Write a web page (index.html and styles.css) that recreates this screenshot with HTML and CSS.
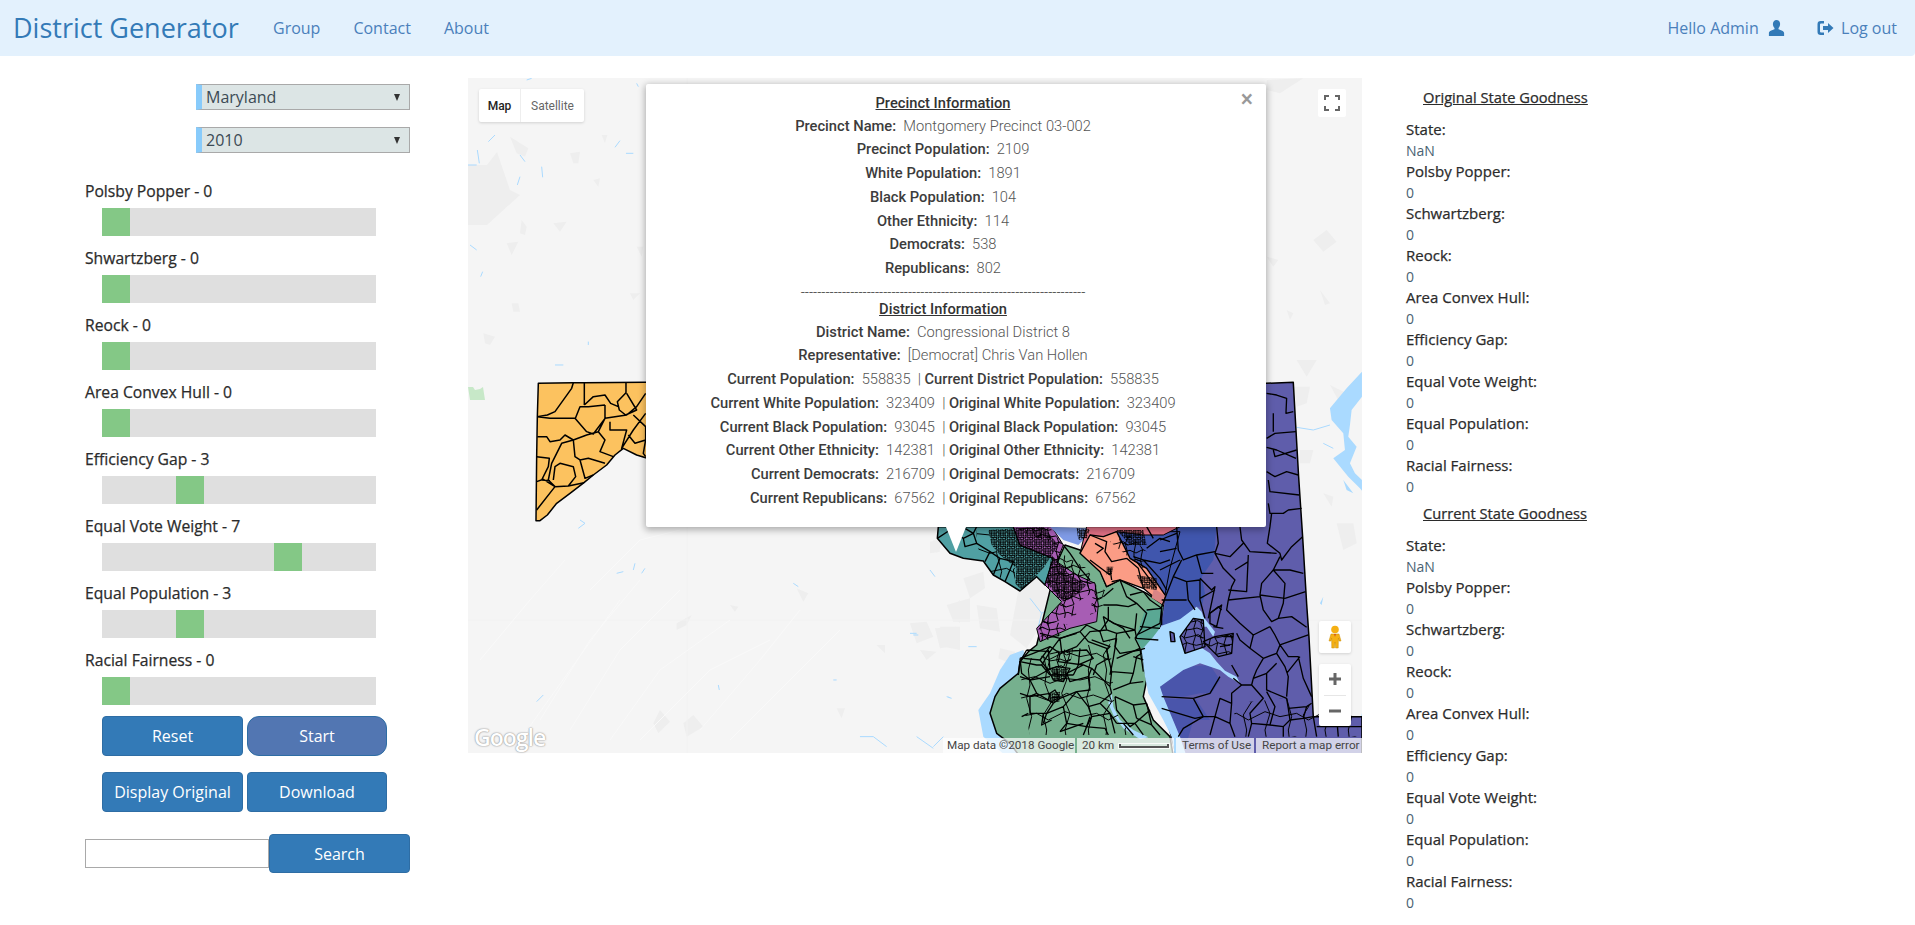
FILE: index.html
```html
<!DOCTYPE html>
<html lang="en">
<head>
    <meta charset="UTF-8">
    <meta name="viewport" content="width=device-width, initial-scale=1.0">
    <title>District Generator</title>
    <link rel="stylesheet" href="styles.css">
</head>
<body>

<!-- Navigation Bar -->
<nav class="navbar">
    <a class="brand" href="#">District Generator</a>
    <ul class="nav-links">
        <li><a href="#">Group</a></li>
        <li><a href="#">Contact</a></li>
        <li><a href="#">About</a></li>
    </ul>
    <ul class="nav-links nav-right">
        <li>
            <a href="#">Hello Admin
                <svg class="nav-icon" viewBox="0 0 16 16"><path d="M8 0C5.8 0 4.4 1.7 4.4 4.1 4.4 5.7 5.1 7.2 6 8V9.3C4 10.1.4 11 .4 13V16H15.6V13C15.6 11 12 10.1 10 9.3V8C10.9 7.2 11.6 5.7 11.6 4.1 11.6 1.7 10.2 0 8 0Z"/></svg>
            </a>
        </li>
        <li>
            <a href="#">
                <svg class="nav-icon icon-logout" viewBox="0 0 16 16"><path d="M6.5 1H3.2Q0 1 0 4.2V11.8Q0 15 3.2 15H6.5V12.6H3.6Q2.5 12.6 2.5 11.5V4.5Q2.5 3.4 3.6 3.4H6.5ZM5.5 6H10.5V3L16 8 10.5 13V10H5.5Z"/></svg>
                Log out
            </a>
        </li>
    </ul>
</nav>

<main class="page">

    <!-- Left controls -->
    <section class="controls">
        <div class="select-wrap">
            <select><option>Maryland</option></select>
        </div>
        <div class="select-wrap">
            <select><option>2010</option></select>
        </div>

        <div class="sliders">
            <div class="slider">
                <label>Polsby Popper - 0</label>
                <div class="track"><div class="thumb" style="margin-left: 0%"></div></div>
            </div>
            <div class="slider">
                <label>Shwartzberg - 0</label>
                <div class="track"><div class="thumb" style="margin-left: 0%"></div></div>
            </div>
            <div class="slider">
                <label>Reock - 0</label>
                <div class="track"><div class="thumb" style="margin-left: 0%"></div></div>
            </div>
            <div class="slider">
                <label>Area Convex Hull - 0</label>
                <div class="track"><div class="thumb" style="margin-left: 0%"></div></div>
            </div>
            <div class="slider">
                <label>Efficiency Gap - 3</label>
                <div class="track"><div class="thumb" style="margin-left: 27%"></div></div>
            </div>
            <div class="slider">
                <label>Equal Vote Weight - 7</label>
                <div class="track"><div class="thumb" style="margin-left: 62.8%"></div></div>
            </div>
            <div class="slider">
                <label>Equal Population - 3</label>
                <div class="track"><div class="thumb" style="margin-left: 27%"></div></div>
            </div>
            <div class="slider">
                <label>Racial Fairness - 0</label>
                <div class="track"><div class="thumb" style="margin-left: 0%"></div></div>
            </div>
        </div>

        <div class="button-grid">
            <button class="btn">Reset</button>
            <button class="btn btn-start">Start</button>
            <button class="btn">Display Original</button>
            <button class="btn">Download</button>
        </div>

        <div class="search-row">
            <input type="text" class="search-input">
            <button class="btn btn-search">Search</button>
        </div>
    </section>

    <!-- Map -->
    <section class="map">
        <svg class="map-canvas" viewBox="468 78 894 675">
            <defs>
                <pattern id="mesh-fine" width="27" height="27" patternUnits="userSpaceOnUse">
                    <path d="M0 4L7 3 14 6 20 3 27 4M0 11L6 10 13 12 20 9 27 11M0 18L7 16 13 19 21 17 27 18M0 24L6 25 14 23 21 25 27 24M3 0L4 7 2 14 4 20 3 27M10 0L9 6 11 12 9 19 10 27M17 0L18 6 16 13 18 20 17 27M23 0L23 5 24 13 23 19 23 27" fill="none" stroke="#000" stroke-width="2.6"/>
                </pattern>
                <pattern id="mesh-mid" width="93" height="93" patternUnits="userSpaceOnUse">
                    <path d="M0 12L20 8 38 18 60 10 76 16 93 12M0 34L18 30 40 38 58 28 78 36 93 34M0 56L22 50 36 60 62 52 74 60 93 56M0 78L16 82 42 76 60 84 80 74 93 78M10 0L14 12 8 32 14 52 6 78 10 93M32 0L30 18 36 36 28 56 34 80 32 93M54 0L58 10 52 30 60 52 54 82 54 93M76 0L74 16 80 36 72 60 80 74 76 93M14 52L36 60M58 10L76 16M36 36L58 28" fill="none" stroke="#000" stroke-width="3"/>
                </pattern>
                <pattern id="mesh-coarse" width="180" height="180" patternUnits="userSpaceOnUse">
                    <path d="M0 30L45 20 90 40 130 25 180 30M0 85L40 75 95 95 140 70 180 85M0 140L50 130 85 150 135 125 180 140M25 0L30 45 20 85 35 140 25 180M80 0L75 40 95 95 70 135 80 180M135 0L140 30 125 70 150 130 135 180" fill="none" stroke="#000" stroke-width="3"/>
                </pattern>
            </defs>

            <!-- base map -->
            <rect x="468" y="78" width="894" height="675" fill="#f5f5f5"/>
            <g fill="#eeeeee">
                <path d="M468 165H487L497 152 510 190 520 195 487 225 468 225Z"/>
                <g transform="translate(460 70) scale(.3333)">
                    <path d="M150 200L205 235 195 260 170 250ZM330 250L360 245 355 280 340 280ZM425 195L442 195 435 220ZM400 330L420 325 415 350ZM280 460L320 455 300 485ZM185 450L200 470 195 495 180 490ZM140 520L175 515 155 555ZM530 530L550 530 545 560ZM510 670L540 670 520 690ZM155 700L175 700 180 725 160 725ZM70 790L105 800 90 825 75 820Z"/>
                </g>
                <g transform="translate(460 360) scale(.3333)">
                    <path d="M600 1050L630 1085 595 1120 580 1090ZM700 1065L730 1100 680 1130 670 1090ZM1130 1045L1155 1045 1145 1075ZM1350 790L1400 785 1420 830 1370 850ZM1440 800L1500 800 1500 870 1450 860ZM1380 870L1430 875 1400 900ZM1250 855L1275 855 1275 880ZM1010 685L1045 700 1030 725ZM810 735L835 740 825 755ZM650 790L695 765 680 795 650 810ZM1470 750L1500 720 1500 790ZM1420 540L1450 550 1430 580Z"/>
                </g>
                <g transform="translate(860 70) scale(.3333)">
                    <path d="M1220 30L1330 25 1260 70 1220 60ZM1360 510L1400 480 1430 515 1390 545ZM1220 560L1255 570 1240 590ZM1380 660L1410 700 1395 705ZM1280 720L1300 730 1290 750Z"/>
                </g>
                <g transform="translate(1150 360) scale(.3333)">
                    <path d="M430 80L480 80 470 130 440 140ZM560 490L610 490 620 550 580 570ZM450 270L490 270 480 310 450 310ZM520 400L550 410 545 440ZM440 0L500 0 470 50ZM540 75L590 100 570 130Z"/>
                </g>
                <g transform="translate(930 525) scale(.3333)">
                    <path d="M0 50L25 45 30 80 0 85ZM100 160L160 140 165 190 120 220ZM50 240L120 220 120 290 70 290ZM15 310L80 305 90 360 30 370ZM140 240L200 250 210 320 150 310ZM210 370L255 380 250 420 205 400ZM270 170L330 155 395 230 320 320 290 370 240 330Z"/>
                </g>
            </g>
            <path d="M468 620H1362M687 78V753" stroke="#f2f2f2" fill="none"/>
            <g fill="none" stroke="#f9f9f9" stroke-width="1">
                <path d="M540 720L590 640 640 580M570 730L620 650 680 590M610 740L660 670 730 620M480 660L530 600 565 560M700 730L760 660 800 610M640 740L710 670 770 640M520 740L570 670 620 600M590 590L640 540 680 530M730 740L790 680 840 630"/>
            </g>
            <path d="M468 387H473L475 390 480 389 483 387 485 400H470Z" fill="#c7e8c8"/>

            <!-- base map water -->
            <g fill="#aadaff">
                <g transform="translate(460 70) scale(.3333)" fill="none" stroke="#aadaff" stroke-width="3">
                    <path d="M24 285H50M105 195L85 215M52 240L58 280M180 255L195 275M180 320L172 345M465 232L480 212M498 250H520M245 290L248 322M200 30L215 25M530 40L535 50M30 525L50 540M68 605L62 620M385 815V825M285 885H310"/>
                </g>
                <g transform="translate(900 480) scale(.3333)">
                    <path transform="translate(780 -330)" d="M606 5L560 55 510 115 515 150 550 190 555 240 520 265 565 320 600 355 606 362V330L585 310 570 280 590 230 565 200 570 165 575 120 606 80Z"/>
                    <path d="M370 510L330 525 300 570 270 640 235 690 250 770 320 830H430L450 730Z"/>
                    <path d="M1380 720L1386 700V730ZM1260 370L1270 350 1265 375ZM1330 0L1360 40 1340 30Z"/>
                </g>
                <g transform="translate(900 480) scale(.3333)" fill="none" stroke="#aadaff" stroke-width="3">
                    <path d="M1190 -158L1240 -150 1290 -165M1270 -110L1300 -95M390 355L425 400 415 440M425 400L465 375M30 460H50M130 770L100 800M140 650L155 655M205 500H230M90 270L105 290"/>
                </g>
                <g transform="translate(460 360) scale(.3333)" fill="none" stroke="#aadaff" stroke-width="3">
                    <path d="M360 480L375 490 355 505M470 640L490 635M525 610L520 630M555 625L545 640M230 1025L250 1005M1360 825H1375M1000 670L1015 680M775 975L778 990M1120 960H1130M1465 1010L1470 1015M1200 1130L1240 1130 1280 1160M1370 1130L1420 1165"/>
                </g>
            </g>

            <!-- districts -->
            <g transform="translate(460 360) scale(.3333)" stroke="#000" stroke-width="4.5" stroke-linejoin="round">
                <path fill="#fcc25f" d="M235 70L340 68 372 68 557 67 600 67V300L557 293 530 285 490 265 465 285 440 315 400 345 372 368 330 400 290 430 262 465 240 482 228 482 230 290 232 170Z"/>
                <path fill="none" d="M232 170L262 165 285 155 335 85 340 68M373 68V135M498 68V98L472 125 478 150 497 165 530 150 500 100M373 135L400 110 435 105 452 130 475 140M435 135L385 140 360 140 345 178M232 170L270 175 345 175 380 215 400 222 435 175V135M435 175L500 165 530 140 557 100M435 175L415 215 435 240 420 275 460 290M415 215L380 225 340 240 305 250 275 310 265 360 285 380 325 378 347 350 340 320 300 310 285 320 280 360M232 230L260 230 270 245 300 240 315 225 340 240M340 240L345 290 360 300 385 295 435 310M360 300L375 355 400 345M230 290L268 295 265 320 245 360 270 362M230 365L250 358 285 380 230 450M325 378L372 368M450 185V210H500L485 265 520 210 557 160M520 165L557 200V240L525 250 505 225M557 240L550 280 557 290"/>
            </g>

            <g transform="translate(900 480) scale(.3333)" stroke-linejoin="round">
                <!-- east side, then its bluer western part -->
                <path fill="#5f5dab" stroke="#000" stroke-width="4.5" d="M1000 -290H1098L1180 -293 1188 -150 1196 -10 1208 170 1220 370 1227 470 1240 710H1386V830H830L770 600 780 380 740 141Z"/>
                <path fill="#4056ad" d="M750 120H950L945 200 940 240 905 290 915 340 905 380 885 380 850 415 785 437 800 340 740 290 700 250 690 225 740 180Z"/>
                <path fill="#4a55ab" d="M780 620L850 560 930 555 960 600 935 640 900 640 850 650 780 650ZM790 655L840 770 860 790 880 720 930 720 890 660Z"/>

                <!-- green district -->
                <path fill="#76b08e" stroke="#000" stroke-width="4.5" d="M385 515L360 545 355 580 300 625 285 650 270 700 290 760 330 790 360 830H820L810 770 760 720 730 650 740 600 725 510 770 510 780 440 790 375 740 340 660 300 620 320 600 270 540 210 495 195 470 250 410 495Z"/>
                <path fill="#5aa894" d="M710 465L735 390 790 380 780 440 770 510 725 505 710 480Z"/>
                <path fill="#aadaff" d="M635 640L640 680 660 720 700 750 745 772 720 778 670 745 640 705 625 670Z"/>

                <!-- water over the bay -->
                <path fill="#aadaff" d="M905 395L890 380 870 395 840 418 785 437 760 470 725 510 735 590 745 640 790 720 815 770 825 830H860L840 770 790 650 780 620 850 570 900 550 960 570 985 590 1020 610 1010 590 975 572 950 545 930 520 900 500 880 480 900 440 920 440 940 470 945 455 925 430 910 410Z"/>

                <!-- islands -->
                <g transform="translate(780 -330)">
                    <path fill="#5f5dab" stroke="#000" stroke-width="4" d="M60 800L100 745 130 750 135 830 75 850ZM130 815L165 800 220 790 215 850 175 860ZM150 730L185 705 170 770 150 760ZM30 785L42 790 45 815 33 815Z"/>
                    <path fill="url(#mesh-mid)" d="M60 800L100 745 130 750 135 830 75 850ZM130 815L165 800 220 790 215 850 175 860Z"/>
                </g>

                <!-- middle of the state, coordinates taken from the close crop -->
                <g transform="translate(90 135)">
                    <path fill="#50a0a3" stroke="#000" stroke-width="4.5" d="M25 5L22 40 60 85 100 100 160 108 190 150 225 170 270 198 320 155 345 180 370 100 270 60 250 5Z"/>
                    <path fill="#a75db4" stroke="#000" stroke-width="3" d="M250 5H365L400 60 380 110 440 150 495 175 505 240 500 290 420 310 330 350 320 310 395 230 345 180 370 100 270 60Z"/>
                    <path fill="#7f9be6" d="M360 5L475 10 470 35 445 60 400 45Z"/>
                    <path fill="#4056ad" stroke="#000" stroke-width="3" d="M560 20L750 20 720 130 705 210 650 130 600 100 580 60Z"/>
                    <path fill="#df6f84" stroke="#000" stroke-width="3" d="M470 5H750L700 30 640 30 560 20 490 50 510 75 450 85Z"/>
                    <path fill="#fb9c85" stroke="#000" stroke-width="4" d="M450 85L480 30 520 35 560 20 580 60 600 100 650 130 705 210 700 240 640 190 570 165 530 185 510 140Z"/>
                    <path fill="#da8585" d="M672 190L705 212 700 240 665 218Z"/>

                    <g fill="none" stroke="#000" stroke-width="4">
                        <path d="M400 60L420 85 450 130 480 165M480 105L500 120 540 150M545 170L570 165 590 215 620 235M520 215L550 190M520 240H560L595 245 620 235 650 265 635 310 615 340M600 210L640 200 660 225 695 250M650 255L695 250 690 295M620 330L690 295M535 245V285L580 310 600 340M535 285L510 320 520 350 560 340M510 320L470 300 450 320 475 350 530 370 535 400 500 420M450 320L390 340 360 380 290 375M360 380L335 420 360 450M390 340L395 380 470 375 490 400 445 420 430 450M615 340L630 370 640 440M560 340L550 400 540 450M290 375L270 410 320 420 335 420M270 410L265 450M450 370L445 420M500 420L490 450M560 400L630 370M360 450H430"/>
                        <path d="M480 30L530 50 525 80 545 110 590 100M540 130L545 165M590 100L625 130 640 190M620 110L680 190M495 55L520 70 500 85"/>
                        <path d="M22 40L60 15M60 15L100 40 130 25 140 55 180 80 165 110M100 40L105 65 140 55M180 80L210 100 190 150M210 100L250 110 225 170M130 25L140 5M105 10L130 25"/>
                        <path d="M650 70L690 40 720 50M640 105L690 115 720 105M610 95L640 105 690 160 710 195M670 40L650 5"/>
                    </g>

                    <!-- dense precincts -->
                    <path fill="url(#mesh-coarse)" d="M140 15L175 15 185 60 210 90 255 130 255 175 190 150 160 108 140 60Z"/>
                    <path fill="url(#mesh-fine)" d="M175 15L340 5 385 60 340 130 320 150 275 195 255 175 260 130 210 90 185 60Z"/>
                    <path fill="url(#mesh-mid)" d="M250 8L360 8 400 60 380 110 420 140 480 165 490 200 430 240 440 270 400 280 340 310 320 335 330 300 395 230 345 180 360 130 380 60Z"/>
                    <path fill="url(#mesh-fine)" d="M365 90L420 150 470 180 440 210 400 230 350 175Z"/>
                    <path fill="url(#mesh-fine)" d="M560 15L640 15 650 60 600 60ZM620 150L680 160 680 195 640 190ZM440 10L480 12 470 40 445 45ZM530 125L550 125 545 150 530 150Z"/>
                    <path fill="url(#mesh-mid)" d="M385 80L470 130 510 200 520 250 480 270 490 200 420 150 380 110ZM495 185L525 195 515 225 495 215ZM540 50L600 30 650 80 640 130 600 100Z"/>
                    <path fill="url(#mesh-mid)" d="M360 380L430 370 420 420 350 440ZM340 285L420 300 380 340 330 350Z"/>
                </g>

                <!-- southern green precincts -->
                <g transform="translate(360 390)" fill="none" stroke="#000" stroke-width="4">
                    <path fill="url(#mesh-coarse)" stroke="none" d="M10 150L270 90 280 240 285 300 330 375H30L0 250Z"/>
                    <path d="M0 145L40 130 90 110 120 130 170 110 210 65 260 60 250 20M120 130L115 155 190 165 215 175 270 230 275 250M260 60L290 70 285 110 300 130 360 120 375 115M215 90L270 110 260 120 275 185 270 230M275 185L340 190 350 140 365 130M340 190L330 220 370 215M280 240L330 220M285 260L290 300 330 350 345 340 390 300M285 260L340 285 380 280M190 165L140 190 150 215 205 200 210 240 170 245 130 290 80 310H30V260L50 250 30 210 0 200M170 245L205 290 215 320 270 310 290 340M130 290L140 340 120 365M205 290L240 280 275 250M270 310L285 370M200 350L210 320M195 350L255 355 265 375M70 310L65 345 95 330M5 320L25 310"/>
                    <path d="M85 180L110 170 150 175 130 215 100 210ZM100 190L125 195M110 175L115 210M90 250L105 240 120 265 100 280 85 270ZM95 262H115M60 70L120 85 170 70M0 145L5 190 30 210 90 200M85 120L90 180M250 20L280 40 345 60M290 70L345 60M345 60L350 10M345 60L350 85 415 90M360 50L420 55M340 140L370 150M310 340L340 375M350 325L395 345M140 340L200 350"/>
                    <path d="M10 145L60 150 90 110M30 210L85 180M60 150L85 180M205 200L215 175M30 260L90 250M50 250L85 270M0 250L30 260M100 280L80 310M120 265L170 245M80 310L70 340M215 320L200 350M240 280L270 310M290 340H345M340 285L350 325M380 280L395 345M345 340L370 375M395 345L420 375M200 350L190 375M120 365L190 340"/>
                    <path fill="url(#mesh-fine)" stroke="none" d="M90 175L145 175 130 215 100 210ZM85 250L120 245 118 275 90 280Z"/>
                </g>

                <!-- eastern precincts -->
                <g transform="translate(780 -330)" fill="none" stroke="#000" stroke-width="4">
                    <path fill="url(#mesh-coarse)" stroke="none" d="M220 1000L380 985 460 1010 606 1045V1100H230Z"/>
                    <path d="M320 70L350 75 380 85 378 130 400 125M340 130V185M320 205L345 190 408 185M320 232L350 240 408 265M340 240L345 260 410 240M320 305L345 320 380 305 415 315M325 330L330 365 418 375M325 400L330 430H370L385 420 425 415M335 430L330 470 322 520 360 550 365 570 395 530 428 500"/>
                    <path d="M240 470L245 510 270 545 350 550M170 470L175 520 165 550 190 595 225 630 215 650 205 690M165 550L210 560 250 520M265 555L260 665 205 660M225 600L265 575M360 560L340 600H390L430 610M340 600L305 640 300 675 310 720 335 755 355 745 370 700 375 640 340 600M375 685L437 665M355 745L395 740 440 772M300 675L375 685M205 690L300 680M205 690L200 720 240 760 280 795 330 770M330 770L345 795 360 825 445 795"/>
                    <path d="M280 795L270 835 310 865 350 850 360 825 385 860H415L430 925 455 980M270 835L240 810 230 790M310 865L290 900 280 925 320 910 350 880M350 850L375 890 385 920 380 980M420 860L380 910M280 925L275 945H245L215 970V1000M320 910V960L380 985 385 1015 440 1010 455 1000M275 945L310 985 270 1030 275 1060 330 1065 345 1010 320 965M215 1000L210 1060 225 1100M5 980L100 985 150 970 180 920M100 985L130 1040H165L180 985 215 1000M165 1040L150 1095M130 1040L70 1075 55 1100M210 1060L165 1040M275 1060L265 1100M330 1065L370 1070V1100M385 1015L390 1050 370 1070M440 1010L430 1045 390 1050M430 1045L460 1040 470 1100M470 1070H606M530 1040L535 1100"/>
                    <path d="M50 470L55 540 70 570 110 555 125 610H160M110 555L165 545M0 545L50 535M0 600L60 570M0 510L50 490M65 570L40 620 5 710V765M40 620L80 635 85 690 105 720M80 635L120 630V690L135 745M120 625L155 660 165 650 145 745M5 690H80M120 685L165 660"/>
                    <path d="M5 1015L105 1045 130 1040M150 730L175 710 185 720M160 770L190 775M190 800H220M180 830L210 825M235 920L215 885M245 945L220 925"/>
                </g>
            </g>
        </svg>

        <!-- Map controls -->
        <div class="map-type">
            <button class="map-type-btn map-type-active">Map</button>
            <button class="map-type-btn">Satellite</button>
        </div>
        <button class="map-square map-fullscreen">
            <svg viewBox="0 0 18 18" width="18" height="18"><path d="M1 1H6V3H3V6H1ZM12 1H17V6H15V3H12ZM1 12H3V15H6V17H1ZM15 12H17V17H12V15H15Z" fill="#666"/></svg>
        </button>
        <button class="map-square map-pegman">
            <svg viewBox="0 0 14 24" width="14" height="24"><circle cx="7" cy="4.5" r="3.8" fill="#f5b014"/><path d="M3 9H11L13 16H11L10.4 13 10.2 23H7.6L7 17 6.4 23H3.8L3.6 13 3 16H1Z" fill="#f5b014" stroke="#c98d08" stroke-width=".5"/><path d="M6 9H8L7 12Z" fill="#d2521e"/></svg>
        </button>
        <div class="map-zoom">
            <button class="map-zoom-btn">
                <svg viewBox="0 0 12 12" width="12" height="12"><path d="M4.5 0H7.5V4.5H12V7.5H7.5V12H4.5V7.5H0V4.5H4.5Z" fill="#666"/></svg>
            </button>
            <span class="map-zoom-line"></span>
            <button class="map-zoom-btn">
                <svg viewBox="0 0 12 12" width="12" height="12"><path d="M0 4.5H12V7.5H0Z" fill="#666"/></svg>
            </button>
        </div>
        <div class="google-logo">Google</div>
        <div class="attribution">
            <span class="attr-cell attr-data">Map data ©2018 Google</span>
            <span class="attr-cell attr-scale">20 km <i class="scale-bar"></i></span>
            <span class="attr-cell attr-terms">Terms of Use</span>
            <span class="attr-cell attr-report">Report a map error</span>
        </div>

        <!-- Info window -->
        <div class="info-window">
            <span class="info-close">×</span>
            <div class="info-content">
                <h4>Precinct Information</h4>
                <p><b>Precinct Name:</b>&nbsp;&nbsp;Montgomery Precinct 03-002</p>
                <p><b>Precinct Population:</b>&nbsp;&nbsp;2109</p>
                <p><b>White Population:</b>&nbsp;&nbsp;1891</p>
                <p><b>Black Population:</b>&nbsp;&nbsp;104</p>
                <p><b>Other Ethnicity:</b>&nbsp;&nbsp;114</p>
                <p><b>Democrats:</b>&nbsp;&nbsp;538</p>
                <p><b>Republicans:</b>&nbsp;&nbsp;802</p>
                <p class="info-dashes">---------------------------------------------------------------------</p>
                <h4>District Information</h4>
                <p><b>District Name:</b>&nbsp;&nbsp;Congressional District 8</p>
                <p><b>Representative:</b>&nbsp;&nbsp;[Democrat] Chris Van Hollen</p>
                <p><b>Current Population:</b>&nbsp;&nbsp;558835&nbsp;&nbsp;| <b>Current District Population:</b>&nbsp;&nbsp;558835</p>
                <p><b>Current White Population:</b>&nbsp;&nbsp;323409&nbsp;&nbsp;| <b>Original White Population:</b>&nbsp;&nbsp;323409</p>
                <p><b>Current Black Population:</b>&nbsp;&nbsp;93045&nbsp;&nbsp;| <b>Original Black Population:</b>&nbsp;&nbsp;93045</p>
                <p><b>Current Other Ethnicity:</b>&nbsp;&nbsp;142381&nbsp;&nbsp;| <b>Original Other Ethnicity:</b>&nbsp;&nbsp;142381</p>
                <p><b>Current Democrats:</b>&nbsp;&nbsp;216709&nbsp;&nbsp;| <b>Original Democrats:</b>&nbsp;&nbsp;216709</p>
                <p><b>Current Republicans:</b>&nbsp;&nbsp;67562&nbsp;&nbsp;| <b>Original Republicans:</b>&nbsp;&nbsp;67562</p>
            </div>
            <span class="info-pointer"></span>
        </div>
    </section>

    <!-- Goodness scores -->
    <section class="goodness">
        <h5>Original State Goodness</h5>
        <dl>
            <dt>State:</dt><dd>NaN</dd>
            <dt>Polsby Popper:</dt><dd>0</dd>
            <dt>Schwartzberg:</dt><dd>0</dd>
            <dt>Reock:</dt><dd>0</dd>
            <dt>Area Convex Hull:</dt><dd>0</dd>
            <dt>Efficiency Gap:</dt><dd>0</dd>
            <dt>Equal Vote Weight:</dt><dd>0</dd>
            <dt>Equal Population:</dt><dd>0</dd>
            <dt>Racial Fairness:</dt><dd>0</dd>
        </dl>
        <h5>Current State Goodness</h5>
        <dl>
            <dt>State:</dt><dd>NaN</dd>
            <dt>Polsby Popper:</dt><dd>0</dd>
            <dt>Schwartzberg:</dt><dd>0</dd>
            <dt>Reock:</dt><dd>0</dd>
            <dt>Area Convex Hull:</dt><dd>0</dd>
            <dt>Efficiency Gap:</dt><dd>0</dd>
            <dt>Equal Vote Weight:</dt><dd>0</dd>
            <dt>Equal Population:</dt><dd>0</dd>
            <dt>Racial Fairness:</dt><dd>0</dd>
        </dl>
    </section>
</main>

</body>
</html>
```

FILE: styles.css
```css
body {
    font-family: "Open Sans", sans-serif;
    font-size: 14px;
    line-height: 21px;
    margin: 0;
    padding: 0;
    background-color: #fff;
    color: #333;
    overflow: hidden;
}
a {
    color: #337ab7;
    text-decoration: none;
}

/* navbar */
.navbar {
    display: flex;
    align-items: center;
    height: 56px;
    padding-left: 13px;
    background-color: #e3f1fd;
    border-radius: 0 0 4px 0;
}
.brand {
    font-size: 27px;
    line-height: 56px;
    width: 260px;
}
.nav-links {
    display: flex;
    gap: 33px;
    margin: 0;
    padding: 0;
    list-style: none;
    font-size: 16px;
}
.nav-links a {
    color: #4a80bb;
}
.nav-right {
    margin-left: auto;
    gap: 32px;
    padding-right: 18px;
}
.nav-icon {
    width: 17px;
    height: 16px;
    margin-left: 5px;
    vertical-align: -2px;
    fill: #337ab7;
}
.icon-logout {
    margin: 0 3px 0 0;
}

/* left column */
.page {
    display: flex;
    align-items: flex-start;
}
.controls {
    width: 325px;
    margin-left: 85px;
    padding-top: 28px;
    flex: none;
}
.select-wrap {
    position: relative;
    width: 214px;
    height: 26px;
    margin: 0 0 17px auto;
}
.select-wrap::after {
    content: "";
    position: absolute;
    right: 10px;
    top: 10px;
    border-left: 3px solid transparent;
    border-right: 3px solid transparent;
    border-top: 7px solid #333;
}
.select-wrap select {
    appearance: none;
    width: 100%;
    height: 100%;
    padding: 0 0 0 4px;
    border: 1px solid #a9a9a9;
    border-left: 6px solid #88cbfb;
    border-radius: 0;
    background-color: #dce5e5;
    color: #3b4a54;
    font-family: "Open Sans", sans-serif;
    font-size: 16px;
}
.sliders {
    margin-top: 28px;
}
.slider {
    height: 55px;
    margin-bottom: 12px;
}
.slider label {
    display: block;
    height: 21px;
    margin-bottom: 6px;
    font-size: 15.7px;
    -webkit-text-stroke: 0.25px #2b2b2b;
    color: #2b2b2b;
}
.track {
    width: 274px;
    height: 28px;
    margin-left: 17px;
    background-color: #dfdfdf;
}
.thumb {
    width: 28px;
    height: 28px;
    background-color: #84c886;
}
.button-grid {
    display: grid;
    grid-template-columns: 141px 140px;
    grid-auto-rows: 40px;
    column-gap: 4px;
    row-gap: 16px;
    margin: -1px 0 0 17px;
}
.btn {
    padding: 0;
    border: 1px solid #2e6da4;
    border-radius: 4px;
    background-color: #337ab7;
    color: #fff;
    font-family: "Open Sans", sans-serif;
    font-size: 16px;
}
.btn-start {
    background-color: #5276b2;
    border-radius: 12px;
}
.search-row {
    display: flex;
    align-items: center;
    margin-top: 22px;
}
.search-input {
    box-sizing: border-box;
    width: 184px;
    height: 29px;
    border: 1px solid #a9a9a9;
    padding: 0 4px;
}
.btn-search {
    width: 141px;
    height: 39px;
}

/* map */
.map {
    position: relative;
    flex: none;
    width: 894px;
    height: 675px;
    margin: 22px 0 0 58px;
    font-family: Roboto, sans-serif;
}
.map-canvas {
    display: block;
    width: 894px;
    height: 675px;
}
.map-type {
    position: absolute;
    left: 11px;
    top: 11px;
    display: flex;
    height: 33px;
    border-radius: 2px;
    background-color: #fff;
    box-shadow: 0 1px 3px rgba(0,0,0,0.15);
}
.map-type-btn {
    border: 0;
    padding: 0 10px;
    background: transparent;
    color: #666;
    font-family: Roboto, sans-serif;
    font-size: 12px;
}
.map-type-active {
    width: 42px;
    padding: 0;
    color: #222;
    font-weight: 500;
    border-right: 1px solid #eee;
}
.map-square {
    position: absolute;
    display: flex;
    align-items: center;
    justify-content: center;
    padding: 0;
    border: 0;
    border-radius: 2px;
    background-color: #fff;
}
.map-fullscreen {
    left: 850px;
    top: 11px;
    width: 28px;
    height: 28px;
}
.map-pegman {
    left: 851px;
    top: 543px;
    width: 32px;
    height: 32px;
    box-shadow: 0 1px 3px rgba(0,0,0,0.15);
}
.map-zoom {
    position: absolute;
    left: 851px;
    top: 586px;
    display: flex;
    flex-direction: column;
    align-items: center;
    width: 32px;
    height: 62px;
    border-radius: 2px;
    background-color: #fff;
    box-shadow: 0 1px 3px rgba(0,0,0,0.15);
}
.map-zoom-btn {
    display: flex;
    align-items: center;
    justify-content: center;
    flex: 1;
    width: 100%;
    padding: 0;
    border: 0;
    background: transparent;
}
.map-zoom-line {
    width: 22px;
    height: 1px;
    background-color: #e6e6e6;
}
.google-logo {
    position: absolute;
    left: 6px;
    bottom: 1px;
    font-family: "Open Sans", sans-serif;
    font-size: 23px;
    line-height: 30px;
    font-weight: 600;
    letter-spacing: -1px;
    color: #fff;
    text-shadow: 0 0 2px #999, 0 0 1px #888;
}
.attribution {
    position: absolute;
    right: 0;
    bottom: 0;
    display: flex;
    gap: 2px;
    height: 15px;
    font-size: 11.7px;
    line-height: 15px;
    color: #444;
    white-space: nowrap;
}
.attr-cell {
    display: flex;
    align-items: center;
    box-sizing: border-box;
    padding-left: 6px;
    background-color: rgba(255,255,255,0.72);
}
.attr-data {
    width: 132px;
    padding-left: 4px;
}
.attr-scale {
    width: 97px;
    gap: 5px;
    padding-left: 5px;
}
.attr-terms {
    width: 78px;
}
.attr-report {
    width: 106px;
}
.scale-bar {
    display: block;
    width: 50px;
    height: 4px;
    box-sizing: border-box;
    border: solid #555;
    border-width: 0 2px 2px;
    outline: 1px solid rgba(255,255,255,0.8);
}

/* info window */
.info-window {
    position: absolute;
    left: 178px;
    top: 6px;
    width: 620px;
    height: 443px;
    border-radius: 2px;
    background-color: #fff;
    box-shadow: 0 2px 7px 1px rgba(0,0,0,0.3);
}
.info-pointer {
    position: absolute;
    left: 300px;
    top: 100%;
    border-left: 10px solid transparent;
    border-right: 10px solid transparent;
    border-top: 25px solid #fff;
}
.info-close {
    position: absolute;
    right: 13px;
    top: 4px;
    font-size: 23px;
    line-height: 23px;
    font-weight: 500;
    color: #999;
}
.info-content {
    padding: 8px 26px 0 0;
    text-align: center;
    font-size: 14.7px;
    line-height: 23.73px;
    font-weight: 300;
    color: #555;
}
.info-content h4 {
    margin: 0 0 -1px;
    font-size: 14.7px;
    font-weight: 500;
    text-decoration: underline;
    color: #333;
}
.info-content p {
    margin: 0;
    white-space: nowrap;
}
.info-content b {
    font-weight: 500;
    color: #3c3c3c;
}
.info-dashes {
    height: 17px;
    color: #333;
    font-size: 14.4px;
}

/* right column */
.goodness {
    margin-left: 44px;
    padding-top: 31px;
    width: 300px;
    flex: none;
}
.goodness h5 {
    margin: 0 0 11px 17px;
    font-size: 14.7px;
    font-weight: 400;
    -webkit-text-stroke: 0.25px #2b2b2b;
    line-height: 21px;
    text-decoration: underline;
    color: #2b2b2b;
}
.goodness dl {
    margin: 0 0 6px;
}
.goodness dt {
    font-size: 15px;
    -webkit-text-stroke: 0.25px #2b2b2b;
    color: #2b2b2b;
}
.goodness dd {
    margin: 0;
    color: #4a6272;
}
```
